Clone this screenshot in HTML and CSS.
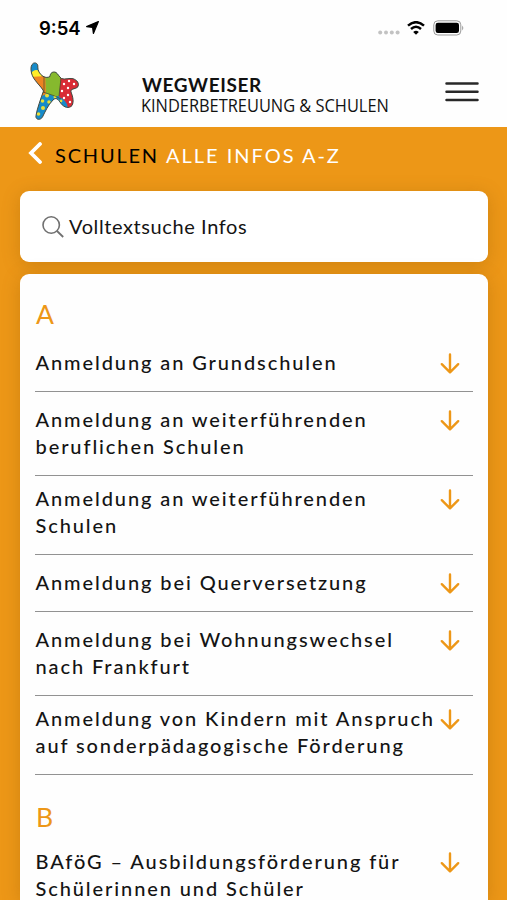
FILE: index.html
```html
<!DOCTYPE html>
<html lang="de">
<head>
  <meta charset="UTF-8">
  <meta name="viewport" content="width=device-width, initial-scale=1.0">
  <title>Wegweiser Kinderbetreuung &amp; Schulen</title>
  <link rel="stylesheet" href="styles.css">
</head>
<body>

  <!-- arrow used by every entry -->
  <svg class="symbols" aria-hidden="true">
    <symbol id="arrow-down" viewBox="0 0 20 22">
      <path d="M10 1.5V19M1.8 11.2L10 19.3L18.2 11.2" fill="none" stroke="currentColor" stroke-width="2.4" stroke-linecap="round" stroke-linejoin="round"/>
    </symbol>
  </svg>

  <div class="status-bar">
    <span class="time">9:54</span>
    <svg class="location" viewBox="0 0 13 13"><path d="M12.4 0.6L0.6 5.6L6.6 6.4L7.4 12.4Z" fill="#000" stroke="#000" stroke-width="1.2" stroke-linejoin="round"/></svg>
    <div class="status-icons">
      <svg class="dots" viewBox="0 0 22 5" fill="#c2c2c2"><circle cx="2.2" cy="2.5" r="2"/><circle cx="8" cy="2.5" r="2"/><circle cx="13.8" cy="2.5" r="2"/><circle cx="19.6" cy="2.5" r="2"/></svg>
      <svg class="wifi" viewBox="0 0 18 14">
        <path d="M1 4.6Q9-2.2 17 4.6M4 8Q9 3.6 14 8" fill="none" stroke="#000" stroke-width="2.5"/>
        <path d="M9 13.7L6.2 10.9Q9 8.7 11.8 10.9Z" fill="#000"/>
      </svg>
      <svg class="battery" viewBox="0 0 32 16">
        <rect x="0.8" y="0.8" width="27" height="14.2" rx="4" fill="none" stroke="#999"/>
        <rect x="2.6" y="2.7" width="23.4" height="10.4" rx="2.3" fill="#000"/>
        <path d="M29.2 5.5Q31.4 8 29.2 10.5Z" fill="#999"/>
      </svg>
    </div>
  </div>

  <header class="header">
    <svg class="logo" viewBox="0 0 50 60">
      <defs>
        <clipPath id="figure">
          <path d="M3.5 1.2C6 0.2 8.2 2 7.8 5C7.7 8.5 9.5 12 13 14.3C16 16 18 15.5 20 14.5C20 11 23 9 26 10.5C28 12 29 14.5 31.5 16.5C35 18 39 15.7 43 16.7C47 18 50 21.5 47.5 25.2C45 27.3 40 26.5 41 30C43 35 44 40 42 43.5C39 47 34 45.5 31 41.5C28 37 26 35 23 38C18 43 15 50 12.5 55C10 59 5 57.5 6 53.5C7 47 11 36 13.5 29C11 24 3 18 1.5 11C0.3 6.5 1 2.5 3.5 1.2Z"/>
        </clipPath>
      </defs>
      <g clip-path="url(#figure)">
        <path d="M0 0H50V60H0Z" fill="#168bca"/>
        <path d="M0 12Q5 6 9 9L14 14L0 19Z" fill="#ffed27"/>
        <path d="M0 15L16 14V32L12 34L0 19Z" fill="#ee8422"/>
        <path d="M15 8H32L29 34L24 34L16 31Z" fill="#86b92e"/>
        <path d="M31 12H50V48L38 46Q37 38 29 35Z" fill="#d92b35"/>
        <g fill="#e8df38"><circle cx="17" cy="33.5" r="2"/><circle cx="12.5" cy="39" r="1.8"/><circle cx="19" cy="40" r="1.8"/><circle cx="13" cy="46" r="2"/><circle cx="8.5" cy="52" r="1.8"/><circle cx="25" cy="35" r="1.5"/><circle cx="31" cy="39" r="1.4"/></g>
        <g fill="#fff"><circle cx="34" cy="22" r="1.2"/><circle cx="39" cy="19" r="1.2"/><circle cx="44" cy="22" r="1.2"/><circle cx="38" cy="26" r="1.2"/><circle cx="32" cy="29" r="1.2"/><circle cx="38" cy="33" r="1.2"/><circle cx="34" cy="36" r="1.2"/><circle cx="40" cy="40" r="1.2"/></g>
        <path d="M14 13V31M31 16L29 34M13 30L25 34L31 37" fill="none" stroke="#40502b" stroke-width="0.7"/>
      </g>
      <path d="M3.5 1.2C6 0.2 8.2 2 7.8 5C7.7 8.5 9.5 12 13 14.3C16 16 18 15.5 20 14.5C20 11 23 9 26 10.5C28 12 29 14.5 31.5 16.5C35 18 39 15.7 43 16.7C47 18 50 21.5 47.5 25.2C45 27.3 40 26.5 41 30C43 35 44 40 42 43.5C39 47 34 45.5 31 41.5C28 37 26 35 23 38C18 43 15 50 12.5 55C10 59 5 57.5 6 53.5C7 47 11 36 13.5 29C11 24 3 18 1.5 11C0.3 6.5 1 2.5 3.5 1.2Z" fill="none" stroke="#444b40" stroke-width="1"/>
    </svg>
    <div class="brand">
      <div class="brand-name">WEGWEISER</div>
      <div class="brand-sub">KINDERBETREUUNG &amp; SCHULEN</div>
    </div>
    <svg class="menu" viewBox="0 0 34 20"><path d="M1.5 1.5H32.5M1.5 9.8H32.5M1.5 18H32.5" stroke="#282828" stroke-width="2.5" stroke-linecap="round"/></svg>
  </header>

  <main class="content">
    <nav class="breadcrumb">
      <svg class="back" viewBox="0 0 15 22"><path d="M12 2L3 11L12 20" fill="none" stroke="#fff" stroke-width="3.8" stroke-linecap="round"/></svg>
      <span class="section">SCHULEN</span>
      <span class="page">ALLE INFOS A-Z</span>
    </nav>

    <div class="search">
      <svg class="search-icon" viewBox="0 0 22 22"><circle cx="9.2" cy="9" r="8.2" fill="none" stroke="#707070" stroke-width="1.6"/><path d="M15 15L21.2 21" stroke="#707070" stroke-width="1.8"/></svg>
      <span class="search-text">Volltextsuche Infos</span>
    </div>

    <div class="list">
      <h2 class="letter">A</h2>
      <div class="entry first"><span>Anmeldung an Grundschulen</span><svg class="arrow"><use href="#arrow-down"/></svg></div>
      <div class="entry"><span>Anmeldung an weiterführenden<br>beruflichen Schulen</span><svg class="arrow"><use href="#arrow-down"/></svg></div>
      <div class="entry tight"><span>Anmeldung an weiterführenden<br>Schulen</span><svg class="arrow"><use href="#arrow-down"/></svg></div>
      <div class="entry"><span>Anmeldung bei Querversetzung</span><svg class="arrow"><use href="#arrow-down"/></svg></div>
      <div class="entry"><span>Anmeldung bei Wohnungswechsel<br>nach Frankfurt</span><svg class="arrow"><use href="#arrow-down"/></svg></div>
      <div class="entry tight"><span>Anmeldung von Kindern mit Anspruch<br>auf sonderpädagogische Förderung</span><svg class="arrow"><use href="#arrow-down"/></svg></div>
      <h2 class="letter">B</h2>
      <div class="entry"><span>BAföG – Ausbildungsförderung für<br>Schülerinnen und Schüler</span><svg class="arrow"><use href="#arrow-down"/></svg></div>
    </div>
  </main>

</body>
</html>
```
FILE: styles.css
```css
* {
  box-sizing: border-box;
}
body {
  margin: 0;
  height: 900px;
  overflow: hidden;
  display: flex;
  flex-direction: column;
  font-family: Lato, "Open Sans", sans-serif;
  background-color: #fefefe;
  color: #141414;
}
svg {
  display: block;
  flex: none;
}
.symbols {
  display: none;
}
/* Phone status bar */
.status-bar {
  display: flex;
  flex: none;
  align-items: center;
  height: 55px;
  padding: 0 42px 0 39px;
}
.time {
  font-family: Inter, sans-serif;
  font-size: 18.5px;
  font-weight: 600;
  color: #000;
}
.location {
  width: 13px;
  height: 13px;
  margin-left: 5px;
}
.status-icons {
  display: flex;
  align-items: center;
  margin-left: auto;
}
.dots {
  width: 22px;
  height: 5px;
  margin: 10px 7px 0 0;
}
.wifi {
  width: 18px;
  height: 14px;
  margin-right: 8px;
}
.battery {
  width: 32px;
  height: 16px;
}
/* Header */
.header {
  display: flex;
  flex: none;
  height: 72px;
  padding: 7px 28px 0 30px;
}
.logo {
  width: 50px;
  height: 60px;
}
.brand {
  width: 250px;
  margin: 12px 0 0 61px;
  white-space: nowrap;
  color: #111;
}
.brand-name {
  padding-left: 1px;
  font-size: 19px;
  font-weight: 700;
  line-height: 22px;
  letter-spacing: 0.6px;
}
.brand-sub {
  font-family: "Open Sans", sans-serif;
  font-size: 18px;
  line-height: 20px;
  margin-top: -1px;
  transform: scaleX(0.91);
  transform-origin: left;
}
.menu {
  width: 34px;
  height: 20px;
  margin: 20px 0 0 auto;
}
/* Orange page */
.content {
  flex: 1;
  min-height: 0;
  display: flex;
  flex-direction: column;
  padding: 0 19px 0 20px;
  background-color: #ed9717;
}
.breadcrumb {
  display: flex;
  flex: none;
  align-items: center;
  height: 64px;
  padding: 0 0 8px 8px;
  font-size: 20px;
  letter-spacing: 1.8px;
  white-space: nowrap;
}
.back {
  width: 15px;
  height: 22px;
  margin: -4px 12px 0 0;
}
.section {
  margin-right: 7px;
  color: #000;
}
.page {
  color: #fff;
  letter-spacing: 2px;
}
.search {
  display: flex;
  flex: none;
  align-items: center;
  height: 71px;
  margin-bottom: 12px;
  padding-left: 22px;
  gap: 5px;
  border-radius: 9px;
  background-color: #fff;
  font-size: 20px;
  letter-spacing: 0.6px;
  box-shadow: 0 3px 18px rgba(140, 85, 0, 0.3);
}
.search-icon {
  width: 22px;
  height: 22px;
}
.search-text {
  padding-bottom: 2px;
}
.list {
  flex: 1;
  min-height: 0;
  padding: 21px 15px 0;
  border-radius: 9px 9px 0 0;
  background-color: #fefefe;
  box-shadow: 0 3px 18px rgba(140, 85, 0, 0.3);
}
.letter {
  margin: 0;
  padding-left: 1px;
  font-size: 26.5px;
  font-weight: 400;
  line-height: 38px;
  color: #ed9717;
}
.entry {
  display: flex;
  justify-content: space-between;
  padding: 14px 13px 15px 0;
  border-bottom: 1px solid #929292;
  font-size: 20px;
  font-weight: 500;
  line-height: 27px;
  letter-spacing: 1.9px;
  white-space: nowrap;
}
.entry span {
  width: 405px;
  padding-left: 0.5px;
}
.entry.first {
  padding-top: 16px;
}
.entry.tight {
  padding-top: 9px;
}
.entry + .letter {
  padding-top: 23px;
  margin-bottom: -2px;
}
.arrow {
  width: 20px;
  height: 22px;
  margin-top: 4px;
  color: #ed9717;
}
```
